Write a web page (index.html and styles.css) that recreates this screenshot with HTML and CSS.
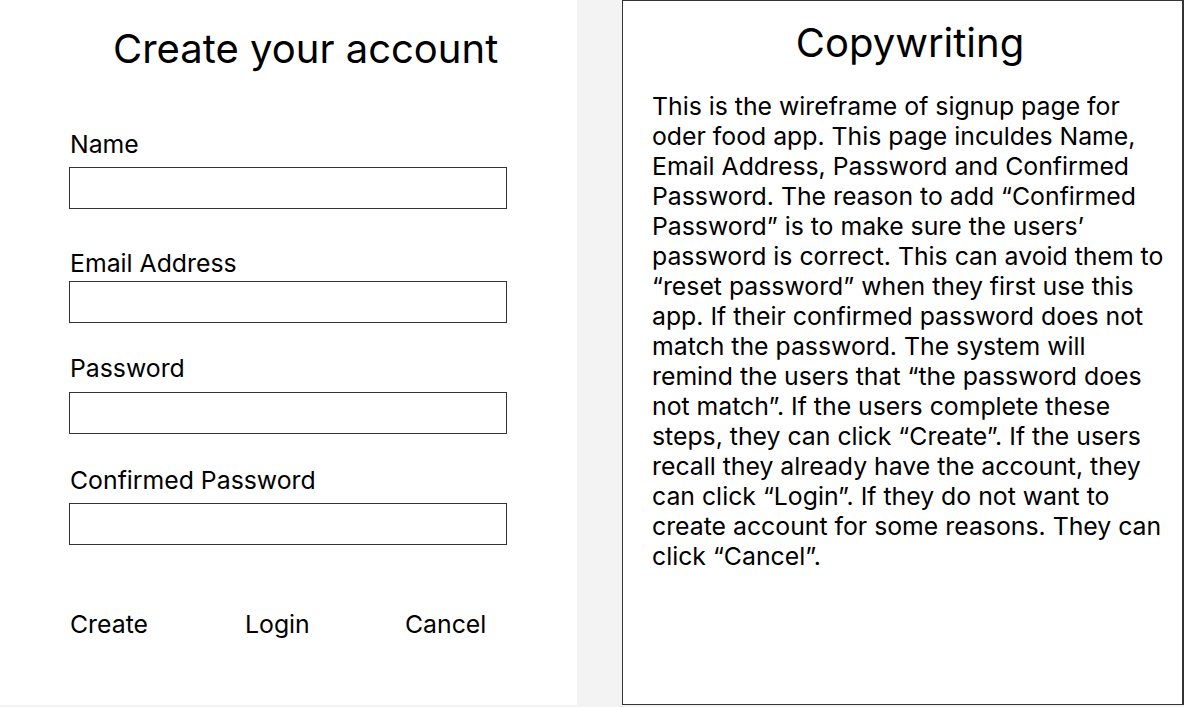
FILE: index.html
```html
<!DOCTYPE html>
<html lang="en">
<head>
<meta charset="utf-8">
<title>Create your account</title>
<link rel="stylesheet" href="styles.css">
</head>
<body>
<div class="page">
  <section class="form-panel">
    <h1 class="title">Create your account</h1>
    <div class="field field-name">
      <label class="label">Name</label>
      <div class="input"></div>
    </div>
    <div class="field field-email">
      <label class="label">Email Address</label>
      <div class="input"></div>
    </div>
    <div class="field field-pass">
      <label class="label">Password</label>
      <div class="input"></div>
    </div>
    <div class="field field-confirm">
      <label class="label">Confirmed Password</label>
      <div class="input"></div>
    </div>
    <div class="actions">
      <span class="action action-create">Create</span>
      <span class="action action-login">Login</span>
      <span class="action action-cancel">Cancel</span>
    </div>
  </section>
  <section class="copy-panel">
    <h2 class="copy-title">Copywriting</h2>
    <p class="copy-text">This is the wireframe of signup page for<br>oder food app. This page inculdes Name,<br>Email Address, Password and Confirmed<br>Password. The reason to add “Confirmed<br>Password” is to make sure the users’<br>password is correct. This can avoid them to<br>“reset password” when they first use this<br>app. If their confirmed password does not<br>match the password. The system will<br>remind the users that “the password does<br>not match”. If the users complete these<br>steps, they can click “Create”. If the users<br>recall they already have the account, they<br>can click “Login”. If they do not want to<br>create account for some reasons. They can<br>click “Cancel”.</p>
  </section>
</div>
</body>
</html>
```

FILE: styles.css
```css
* { box-sizing: border-box; }
html, body { margin: 0; padding: 0; }
body {
  background: #f3f3f3;
  font-family: Inter, "Liberation Sans", sans-serif;
  color: #000;
  width: 1184px;
  height: 707px;
  overflow: hidden;
}
.page {
  display: flex;
  gap: 45px;
  height: 705px;
}
.form-panel {
  width: 577px;
  height: 705px;
  background: #fff;
  padding: 0 0 0 69px;
}
.title {
  margin: 0;
  padding: 25px 0 0 44px;
  font-size: 40px;
  font-weight: 400;
  line-height: 48px;
  white-space: nowrap;
}
.field { width: 438px; }
.label {
  display: block;
  font-size: 24.8px;
  line-height: 26px;
  padding-left: 1px;
  white-space: nowrap;
}
.input {
  height: 42px;
  border: 1px solid #333;
  background: #fff;
}
.field-name { margin-top: 58px; }
.field-name .label { margin-bottom: 10px; }
.field-email { margin-top: 41px; }
.field-email .label { margin-bottom: 5px; }
.field-pass { margin-top: 32px; }
.field-pass .label { margin-bottom: 11px; }
.field-confirm { margin-top: 33px; }
.field-confirm .label { margin-bottom: 10px; }
.actions {
  display: flex;
  margin-top: 66px;
  font-size: 24.8px;
  line-height: 26px;
  padding-left: 1px;
}
.action-create { width: 175px; }
.action-login { width: 160px; }
.copy-panel {
  width: 562px;
  height: 705px;
  background: #fff;
  border: 1px solid #333;
  border-right-width: 2px;
  padding: 0 14px 0 29px;
}
.copy-title {
  margin: 0;
  padding-top: 18px;
  text-align: center;
  font-size: 40px;
  font-weight: 400;
  line-height: 48px;
}
.copy-text {
  margin: 24px 0 0;
  font-size: 24.8px;
  line-height: 30px;
  white-space: nowrap;
}
```
